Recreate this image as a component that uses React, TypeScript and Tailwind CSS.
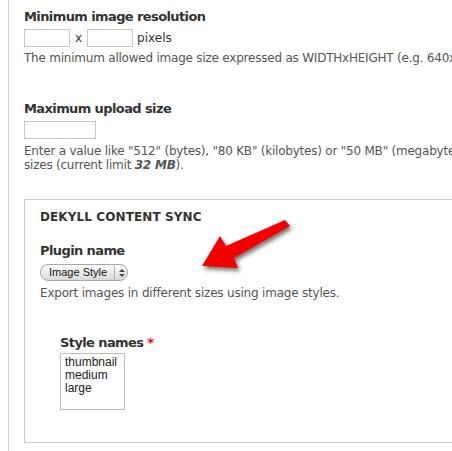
import React from "react";

const FONT = { fontFamily: '"DejaVu Sans", Verdana, sans-serif' };

function TextBox({ w }: { w: string }) {
  return <div className={`${w} h-[18px] border border-[#c8c8c8] bg-white`} />;
}

export default function App() {
  return (
    <div className="relative w-[452px] h-[451px] overflow-hidden bg-white text-[#333]" style={FONT}>
      <div className="ml-[8px] h-full border-l border-[#d0d0d0] pl-[15px]">
        <div className="pt-[9px] text-[13px] leading-[16px] font-bold tracking-[-0.6px]">Minimum image resolution</div>
        <div className="mt-[4px] flex items-center text-[12px]">
          <div className="w-[46px] h-[18px] border border-[#c8c8c8]" />
          <span className="mx-[5px]">x</span>
          <div className="w-[46px] h-[18px] border border-[#c8c8c8]" />
          <span className="ml-[4px]">pixels</span>
        </div>
        <div className="mt-[4px] text-[12px] leading-[15px] text-[#555] tracking-[-0.22px] whitespace-nowrap">
          The minimum allowed image size expressed as WIDTHxHEIGHT (e.g. 640x480).
        </div>

        <div className="mt-[35px] text-[13px] leading-[16px] font-bold tracking-[-0.6px]">Maximum upload size</div>
        <div className="mt-[4px]">
          <TextBox w="w-[72px]" />
        </div>
        <div className="mt-[5px] text-[12px] leading-[14px] text-[#555] tracking-[-0.22px] whitespace-nowrap">
          <div>Enter a value like "512" (bytes), "80 KB" (kilobytes) or "50 MB" (megabytes)</div>
          <div>
            sizes (current limit <em className="font-bold">32 MB</em>).
          </div>
        </div>

        <div className="mt-[27px] border border-[#cccccc] pl-[15px] pt-[9px] pb-[32px] w-[520px]">
          <div className="text-[12px] leading-[16px] font-bold uppercase tracking-[0.1px]">Dekyll content sync</div>

          <div className="mt-[18px] text-[13px] leading-[16px] font-bold tracking-[-0.6px]">Plugin name</div>
          <div className="mt-[5px] flex">
            <div
              className="flex h-[17px] w-[88px] items-center rounded-[8px] border border-[#a8a8a8] bg-gradient-to-b from-[#fdfdfd] via-[#ececec] to-[#d8d8d8] text-[11px] text-[#111]"
              style={{ fontFamily: '"Liberation Sans", Arial, sans-serif' }}
            >
              <span className="pl-[8px] w-[73px]">Image Style</span>
              <span className="h-full border-l border-[#b5b5b5]" />
              <svg width="8" height="10" viewBox="0 0 8 10" className="ml-[3px]">
                <path d="M1 4 L4 1 L7 4 Z" fill="#444" />
                <path d="M1 6 L4 9 L7 6 Z" fill="#444" />
              </svg>
            </div>
          </div>
          <div className="mt-[5px] text-[12px] leading-[14px] text-[#555] tracking-[-0.2px] whitespace-nowrap">
            Export images in different sizes using image styles.
          </div>

          <div className="ml-[20px] mt-[35px]">
            <div className="text-[13px] leading-[16px] font-bold tracking-[-0.6px]">
              Style names <span className="text-[#e00]">*</span>
            </div>
            <div
              className="mt-[2px] h-[57px] w-[65px] border border-[#bdbdbd] pl-[4px] pt-[2px] text-[12px] leading-[13px] text-[#222]"
              style={{ fontFamily: '"Liberation Sans", Arial, sans-serif' }}
            >
              <div>thumbnail</div>
              <div>medium</div>
              <div>large</div>
            </div>
          </div>
        </div>
      </div>

      <svg
        className="absolute left-0 top-0 pointer-events-none drop-shadow-[2px_3px_2px_rgba(0,0,0,0.55)]"
        width="452"
        height="451"
      >
        <path d="M202 266 L220 236 L226 246 L285 220 L290 226 L234 258 L238 268 Z" fill="#f50000" />
      </svg>
    </div>
  );
}
